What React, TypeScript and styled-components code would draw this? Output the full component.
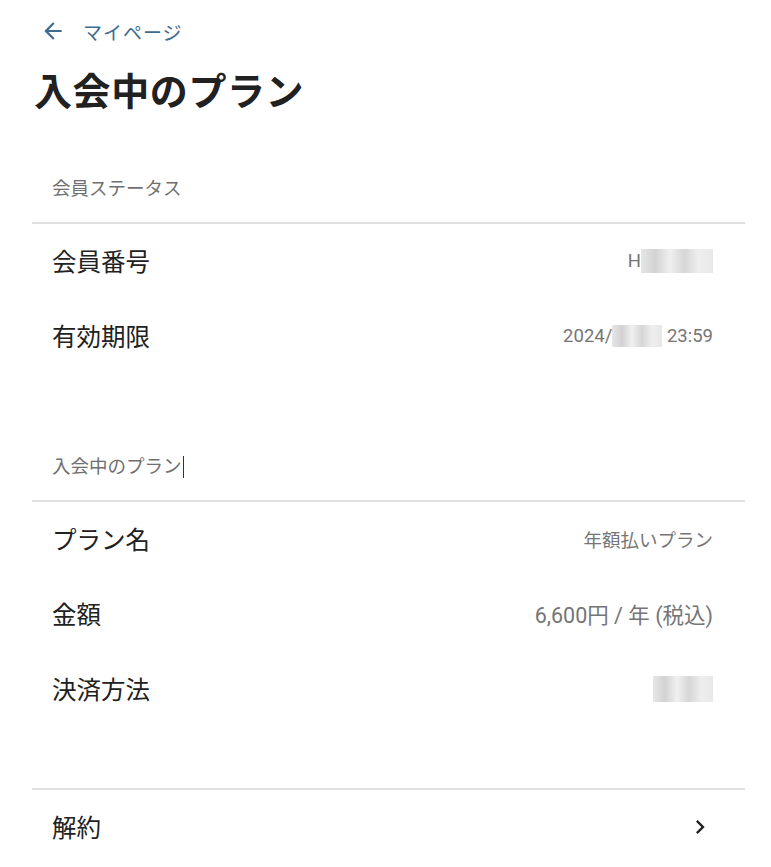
import styled, { createGlobalStyle } from "styled-components";

const GlobalStyle = createGlobalStyle`
  html, body {
    margin: 0;
    padding: 0;
    background: #ffffff;
  }
  body {
    font-family: Roboto, "Noto Sans CJK JP", "Noto Sans", sans-serif;
    color: #212121;
  }
`;

const Page = styled.div`
  width: 771px;
  height: 867px;
  overflow: hidden;
  padding: 0 26px 0 32px;
  box-sizing: border-box;
`;

const BackLink = styled.a`
  display: flex;
  align-items: center;
  gap: 17px;
  height: 40px;
  margin-top: 11px;
  padding-left: 8px;
  color: #3d6b8f;
  font-size: 19px;
  letter-spacing: 1px;
  text-decoration: none;
  cursor: pointer;

  svg {
    width: 26px;
    height: 26px;
    fill: currentColor;
  }
`;

const Title = styled.h1`
  margin: 18px 0 0 2px;
  font-size: 38px;
  line-height: 46px;
  font-weight: 700;
  color: #212121;
  letter-spacing: 0.6px;
`;

const Section = styled.section<{ $gap: number }>`
  margin-top: ${(p) => p.$gap}px;
`;

const SectionHeader = styled.div`
  padding: 0 20px 21px;
  font-size: 18.5px;
  line-height: 24px;
  color: #6f6f6f;
  border-bottom: 2px solid #e0e0e0;
`;

const Caret = styled.span`
  display: inline-block;
  width: 1.5px;
  height: 22px;
  margin-left: 1px;
  vertical-align: -5px;
  background: #333333;
`;

const Divider = styled.div`
  border-top: 2px solid #e0e0e0;
`;

const Row = styled.div<{ $clickable?: boolean }>`
  display: flex;
  align-items: center;
  justify-content: space-between;
  height: 75px;
  padding: 0 32px 2px 20px;
  box-sizing: border-box;
  cursor: ${(p) => (p.$clickable ? "pointer" : "default")};
`;

const Label = styled.span`
  font-size: 24.5px;
  color: #212121;
`;

const Value = styled.span<{ $size?: number }>`
  font-size: ${(p) => p.$size ?? 18.5}px;
  color: #757575;
  display: flex;
  align-items: center;
`;

const Blur = styled.span<{ $w: number; $h?: number }>`
  display: inline-block;
  width: ${(p) => p.$w}px;
  height: ${(p) => p.$h ?? 22}px;
  background: linear-gradient(
    90deg,
    #e6e6e6 0%,
    #d2d2d2 20%,
    #f0f0f0 40%,
    #d6d6d6 60%,
    #eeeeee 80%,
    #e8e8e8 100%
  );
`;

const Chevron = styled.svg`
  width: 28px;
  height: 28px;
  margin-right: -1px;
  fill: #212121;
`;

export default function App() {
  return (
    <>
      <GlobalStyle />
      <Page>
        <BackLink>
          <svg viewBox="0 0 24 24">
            <path d="M20 11H7.83l5.59-5.59L12 4l-8 8 8 8 1.41-1.41L7.83 13H20v-2z" />
          </svg>
          マイページ
        </BackLink>
        <Title>入会中のプラン</Title>

        <Section $gap={62}>
          <SectionHeader>会員ステータス</SectionHeader>
          <Row>
            <Label>会員番号</Label>
            <Value>
              H<Blur $w={72} $h={24} />
            </Value>
          </Row>
          <Row>
            <Label>有効期限</Label>
            <Value>
              2024/<Blur $w={50} />&nbsp;23:59
            </Value>
          </Row>
        </Section>

        <Section $gap={81}>
          <SectionHeader>
            入会中のプラン
            <Caret />
          </SectionHeader>
          <Row>
            <Label>プラン名</Label>
            <Value>年額払いプラン</Value>
          </Row>
          <Row>
            <Label>金額</Label>
            <Value $size={21.5}>6,600円 / 年 (税込)</Value>
          </Row>
          <Row>
            <Label>決済方法</Label>
            <Value>
              <Blur $w={60} $h={26} />
            </Value>
          </Row>
        </Section>

        <Section $gap={61}>
          <Divider />
          <Row $clickable>
            <Label>解約</Label>
            <Chevron viewBox="0 0 24 24">
              <path d="M10 6L8.59 7.41 13.17 12l-4.58 4.59L10 18l6-6z" />
            </Chevron>
          </Row>
        </Section>
      </Page>
    </>
  );
}
